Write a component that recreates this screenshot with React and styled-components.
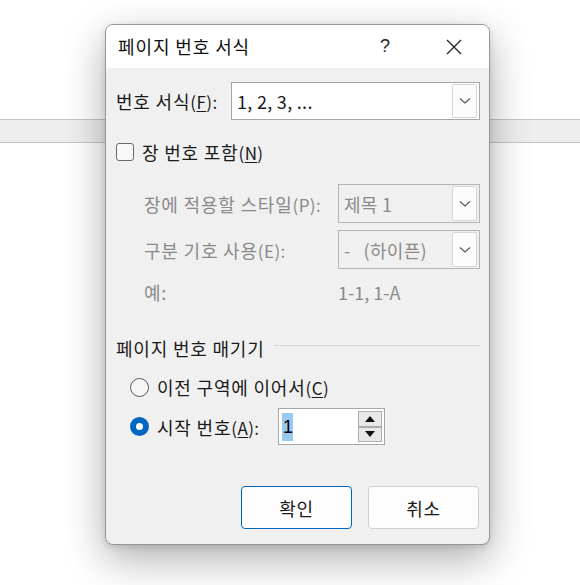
import React from "react";
import styled, { createGlobalStyle } from "styled-components";

const Global = createGlobalStyle`
  html, body { margin: 0; padding: 0; background: #ffffff; }
  body {
    width: 580px; height: 585px; overflow: hidden; position: relative;
    font-family: "Noto Sans CJK KR", "Noto Sans", sans-serif;
  }
`;

const Page = styled.div`
  position: relative;
  width: 580px;
  height: 585px;
  padding-top: 119px;
  box-sizing: border-box;
`;

const Band = styled.div`
  height: 22px;
  background: #eeeeee;
  border-top: 1px solid #c4c4c4;
  border-bottom: 1px solid #c4c4c4;
`;

const Dialog = styled.div`
  position: absolute;
  left: 105px;
  top: 24px;
  width: 385px;
  height: 521px;
  box-sizing: border-box;
  border: 1px solid #979797;
  border-radius: 8px;
  background: #f0f0f0;
  box-shadow: 0 14px 42px rgba(0, 0, 0, 0.32), 0 2px 6px rgba(0, 0, 0, 0.12);
  overflow: hidden;
  display: flex;
  flex-direction: column;
  color: #1a1a1a;
  font-size: 18px;
`;

const TitleBar = styled.div`
  height: 43px;
  background: #ffffff;
  display: flex;
  align-items: center;
  padding-left: 12px;
  flex-shrink: 0;
`;

const Title = styled.div`
  flex: 1;
  font-size: 18px;
  letter-spacing: 0.9px;
  color: #111;
  padding-bottom: 1px;
`;

const TitleBtn = styled.div`
  width: ${(p) => p.$w}px;
  height: 43px;
  display: flex;
  align-items: center;
  justify-content: center;
  font-family: "Liberation Sans", sans-serif;
  font-size: 18px;
  color: #222;
`;

const Body = styled.div`
  flex: 1;
  display: flex;
  flex-direction: column;
  padding: 0 9px 15px 10px;
`;

const Row = styled.div`
  display: flex;
  align-items: center;
  margin-top: ${(p) => p.$mt || 0}px;
  padding-left: ${(p) => p.$indent || 0}px;
  height: ${(p) => p.$h || 24}px;
`;

const Label = styled.div`
  width: ${(p) => (p.$w ? p.$w + "px" : "auto")};
  flex-shrink: 0;
  color: ${(p) => (p.$disabled ? "#8a8a8a" : "#1a1a1a")};
  white-space: nowrap;
  letter-spacing: ${(p) => (p.$plain ? 0 : 0.8)}px;
`;

const U = styled.span`
  text-decoration: underline;
  text-underline-offset: 2px;
  text-decoration-thickness: 1px;
`;

const Paren = styled.span`
  font-size: 17px;
  letter-spacing: 0.4px;
`;

const Select = styled.div`
  flex: 1;
  height: ${(p) => p.$h || 38}px;
  box-sizing: border-box;
  border: 1px solid ${(p) => (p.$disabled ? "#b4b4b4" : "#a6a6a6")};
  background: ${(p) => (p.$disabled ? "#f0f0f0" : "#ffffff")};
  display: flex;
  align-items: center;
  padding: 1px 2px 1px 5px;
  color: ${(p) => (p.$disabled ? "#8a8a8a" : "#1a1a1a")};
`;

const SelectText = styled.div`
  flex: 1;
  white-space: pre;
  letter-spacing: 0.3px;
`;

const DropBtn = styled.div`
  width: 25px;
  align-self: stretch;
  box-sizing: border-box;
  border: 1px solid #d6d6d6;
  border-radius: 2px;
  background: #fcfcfc;
  display: flex;
  align-items: center;
  justify-content: center;
`;

const Check = styled.div`
  width: 18px;
  height: 18px;
  box-sizing: border-box;
  border: 1px solid #6a6a6a;
  border-radius: 3px;
  background: #f8f8f8;
  margin-right: 8px;
`;

const Radio = styled.div`
  width: 19px;
  height: 19px;
  box-sizing: border-box;
  border-radius: 50%;
  border: ${(p) => (p.$on ? "6px solid #0067c0" : "1px solid #5c5c5c")};
  background: ${(p) => (p.$on ? "#ffffff" : "#f6f6f6")};
  margin-right: 8px;
  flex-shrink: 0;
`;

const GroupHead = styled.div`
  display: flex;
  align-items: center;
  height: 24px;
  margin-top: ${(p) => p.$mt}px;
`;

const GroupLine = styled.div`
  flex: 1;
  height: 1px;
  background: #d8d8d8;
  margin-left: 9px;
  margin-top: -5px;
  margin-right: -1px;
`;

const Spin = styled.div`
  width: 107px;
  height: 37px;
  box-sizing: border-box;
  border: 1px solid #a6a6a6;
  background: #ffffff;
  display: flex;
  align-items: center;
  padding: 2px 2px 2px 3px;
`;

const SpinValue = styled.div`
  flex: 1;
  display: flex;
  align-items: center;
`;

const Selected = styled.span`
  background: #99c9ef;
  color: #000;
  padding: 0 0 0 1px;
  line-height: 28px;
  font-size: 18px;
  font-family: "Liberation Sans", sans-serif;
`;

const SpinBtns = styled.div`
  width: 24px;
  align-self: stretch;
  display: flex;
  flex-direction: column;
`;

const SpinBtn = styled.div`
  flex: 1;
  box-sizing: border-box;
  border: 1px solid #adadad;
  background: #e8e8e8;
  display: flex;
  align-items: center;
  justify-content: center;
`;

const Buttons = styled.div`
  display: flex;
  justify-content: flex-end;
  gap: 16px;
  margin-top: auto;
  padding-right: 1px;
`;

const Button = styled.div`
  width: 111px;
  height: 43px;
  box-sizing: border-box;
  border-radius: 4px;
  border: ${(p) => (p.$primary ? "1.5px solid #0067c0" : "1px solid #cfcfcf")};
  background: #fdfdfd;
  display: flex;
  align-items: center;
  justify-content: center;
  font-size: 18px;
  letter-spacing: 0.8px;
  color: #1a1a1a;
`;

const Chevron = () => (
  <svg width="12" height="8" viewBox="0 0 12 8">
    <path d="M1 1.5 L6 6 L11 1.5" fill="none" stroke="#555" strokeWidth="1.1" />
  </svg>
);

const Tri = ({ up }) => (
  <svg width="10" height="6" viewBox="0 0 10 6">
    <path d={up ? "M0 6 L5 0 L10 6 Z" : "M0 0 L5 6 L10 0 Z"} fill="#111" />
  </svg>
);

export default function App() {
  return (
    <>
      <Global />
      <Page>
        <Band />
        <Dialog>
          <TitleBar>
            <Title>페이지 번호 서식</Title>
            <TitleBtn $w={68}>?</TitleBtn>
            <TitleBtn $w={70}>
              <svg width="16" height="16" viewBox="0 0 16 16">
                <path d="M1 1 L15 15 M15 1 L1 15" stroke="#222" strokeWidth="1.3" />
              </svg>
            </TitleBtn>
          </TitleBar>
          <Body>
            <Row $mt={14} $h={38}>
              <Label $w={115}>
                번호 서식<Paren>(<U>F</U>):</Paren>
              </Label>
              <Select>
                <SelectText>1, 2, 3, ...</SelectText>
                <DropBtn>
                  <Chevron />
                </DropBtn>
              </Select>
            </Row>
            <Row $mt={20}>
              <Check />
              <Label>
                장 번호 포함<Paren>(<U>N</U>)</Paren>
              </Label>
            </Row>
            <Row $mt={20} $h={39} $indent={28}>
              <Label $w={194} $disabled>
                장에 적용할 스타일<Paren>(P):</Paren>
              </Label>
              <Select $disabled $h={39}>
                <SelectText>제목 1</SelectText>
                <DropBtn>
                  <Chevron />
                </DropBtn>
              </Select>
            </Row>
            <Row $mt={7} $h={39} $indent={28}>
              <Label $w={194} $disabled>
                구분 기호 사용<Paren>(E):</Paren>
              </Label>
              <Select $disabled $h={39}>
                <SelectText>{"-   (하이픈)"}</SelectText>
                <DropBtn>
                  <Chevron />
                </DropBtn>
              </Select>
            </Row>
            <Row $mt={11} $indent={28}>
              <Label $w={194} $disabled>
                예:
              </Label>
              <Label $disabled $plain>
                1-1, 1-A
              </Label>
            </Row>
            <GroupHead $mt={32}>
              <Label>페이지 번호 매기기</Label>
              <GroupLine />
            </GroupHead>
            <Row $mt={15} $indent={14}>
              <Radio />
              <Label>
                이전 구역에 이어서<Paren>(<U>C</U>)</Paren>
              </Label>
            </Row>
            <Row $mt={9} $h={37} $indent={14}>
              <Radio $on />
              <Label $w={121}>
                시작 번호<Paren>(<U>A</U>):</Paren>
              </Label>
              <Spin>
                <SpinValue>
                  <Selected>1</Selected>
                </SpinValue>
                <SpinBtns>
                  <SpinBtn>
                    <Tri up />
                  </SpinBtn>
                  <SpinBtn>
                    <Tri />
                  </SpinBtn>
                </SpinBtns>
              </Spin>
            </Row>
            <Buttons>
              <Button $primary>확인</Button>
              <Button>취소</Button>
            </Buttons>
          </Body>
        </Dialog>
      </Page>
    </>
  );
}
